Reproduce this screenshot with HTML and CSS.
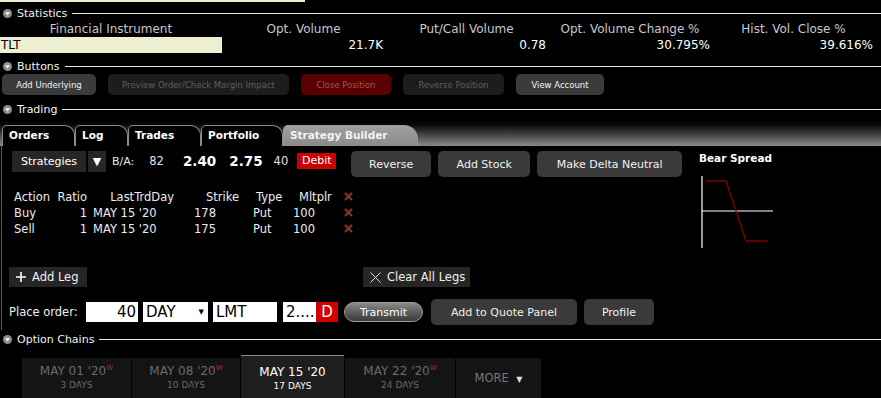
FILE: index.html
```html
<!DOCTYPE html>
<html lang="en">
<head>
  <meta charset="UTF-8" />
  <title>Strategy Builder</title>
  <link rel="stylesheet" href="styles.css">
</head>
<body>
  <div class="topbar"></div>

  <div class="sec-head first">
    <svg class="ico" width="9" height="9" viewBox="0 0 9 9"><circle cx="4.5" cy="4.5" r="4.5" fill="#8d8d8d"/><path d="M2 3.2h5L4.5 6.4z" fill="#fff"/></svg>
    <span class="sec-title">Statistics</span>
    <span class="sec-line"></span>
  </div>
  <div class="stats">
    <div class="stat-h">Financial Instrument</div>
    <div class="stat-h">Opt. Volume</div>
    <div class="stat-h">Put/Call Volume</div>
    <div class="stat-h">Opt. Volume Change %</div>
    <div class="stat-h">Hist. Vol. Close %</div>
    <div class="stat-v sym">TLT</div>
    <div class="stat-v">21.7K</div>
    <div class="stat-v">0.78</div>
    <div class="stat-v">30.795%</div>
    <div class="stat-v">39.616%</div>
  </div>

  <div class="sec-head">
    <svg class="ico" width="9" height="9" viewBox="0 0 9 9"><circle cx="4.5" cy="4.5" r="4.5" fill="#8d8d8d"/><path d="M2 3.2h5L4.5 6.4z" fill="#fff"/></svg>
    <span class="sec-title">Buttons</span>
    <span class="sec-line"></span>
  </div>
  <div class="btn-row">
    <button class="sbtn w-under">Add Underlying</button>
    <button class="sbtn off w-preview">Preview Order/Check Margin Impact</button>
    <button class="sbtn danger w-close">Close Position</button>
    <button class="sbtn off w-rev">Reverse Position</button>
    <button class="sbtn w-view">View Account</button>
  </div>

  <div class="sec-head trading-head">
    <svg class="ico" width="9" height="9" viewBox="0 0 9 9"><circle cx="4.5" cy="4.5" r="4.5" fill="#8d8d8d"/><path d="M2 3.2h5L4.5 6.4z" fill="#fff"/></svg>
    <span class="sec-title">Trading</span>
    <span class="sec-line"></span>
  </div>
  <div class="tabstrip">
    <div class="tab t-orders">Orders</div>
    <div class="tab t-log">Log</div>
    <div class="tab t-trades">Trades</div>
    <div class="tab t-port">Portfolio</div>
    <div class="tab active t-sb">Strategy Builder</div>
  </div>

  <div class="panel">
    <div class="builder">
      <div class="strat-row">
        <div class="strat-select">Strategies</div>
        <div class="strat-arrow">▼</div>
        <span class="ba-label">B/A:</span>
        <span class="ba-size">82</span>
        <span class="ba-price">2.40</span>
        <span class="ba-price">2.75</span>
        <span class="ba-size ask">40</span>
        <span class="debit">Debit</span>
        <button class="btn w-reverse">Reverse</button>
        <button class="btn w-stock">Add Stock</button>
        <button class="btn w-delta">Make Delta Neutral</button>
      </div>

      <div class="legs">
        <div class="c-act">Action</div>
        <div class="c-ratio">Ratio</div>
        <div class="c-day h">LastTrdDay</div>
        <div class="c-strike h">Strike</div>
        <div class="c-type h">Type</div>
        <div class="c-mult h">Mltplr</div>
        <div class="c-x"><svg width="9" height="9" viewBox="0 0 9 9"><path d="M1 1l7 7M8 1L1 8" stroke="#8a3232" stroke-width="2.2"/></svg></div>

        <div class="c-act">Buy</div>
        <div class="c-ratio">1</div>
        <div class="c-day">MAY 15 '20</div>
        <div class="c-strike">178</div>
        <div class="c-type">Put</div>
        <div class="c-mult">100</div>
        <div class="c-x"><svg width="9" height="9" viewBox="0 0 9 9"><path d="M1 1l7 7M8 1L1 8" stroke="#8a3232" stroke-width="2.2"/></svg></div>

        <div class="c-act">Sell</div>
        <div class="c-ratio">1</div>
        <div class="c-day">MAY 15 '20</div>
        <div class="c-strike">175</div>
        <div class="c-type">Put</div>
        <div class="c-mult">100</div>
        <div class="c-x"><svg width="9" height="9" viewBox="0 0 9 9"><path d="M1 1l7 7M8 1L1 8" stroke="#8a3232" stroke-width="2.2"/></svg></div>
      </div>

      <div class="leg-actions">
        <div class="flat w-add">
          <svg width="10" height="10" viewBox="0 0 10 10"><path d="M5 0v10M0 5h10" stroke="#fff" stroke-width="1.6"/></svg>
          Add Leg
        </div>
        <div class="flat w-clear">
          <svg width="11" height="11" viewBox="0 0 11 11"><path d="M0.5 0.5l10 10M10.5 0.5l-10 10" stroke="#ddd" stroke-width="1"/></svg>
          Clear All Legs
        </div>
      </div>

      <div class="order-row">
        <span class="order-label">Place order:</span>
        <div class="field f-qty">40</div>
        <div class="field f-tif">DAY <span class="caret">▼</span></div>
        <div class="field f-type">LMT</div>
        <div class="field f-price">2....</div>
        <div class="f-side">D</div>
        <button class="transmit">Transmit</button>
        <button class="btn w-quote">Add to Quote Panel</button>
        <button class="btn w-profile">Profile</button>
      </div>
    </div>

    <div class="chart">
      <div class="chart-title">Bear Spread</div>
      <svg width="76" height="76" viewBox="0 0 76 76">
        <path d="M3 2v72M3 37h71" stroke="#fff" stroke-width="1.2" fill="none"/>
        <path d="M7 7h20l20 60h21" stroke="#7d0000" stroke-width="1.4" fill="none"/>
      </svg>
    </div>
  </div>

  <div class="sec-head chains-head">
    <svg class="ico" width="9" height="9" viewBox="0 0 9 9"><circle cx="4.5" cy="4.5" r="4.5" fill="#8d8d8d"/><path d="M2 3.2h5L4.5 6.4z" fill="#fff"/></svg>
    <span class="sec-title">Option Chains</span>
    <span class="sec-line"></span>
  </div>
  <div class="chains">
    <div class="exp w1"><div class="exp-date">MAY 01 '20<sup>W</sup></div><div class="exp-days">3 DAYS</div></div>
    <div class="exp w2"><div class="exp-date">MAY 08 '20<sup>W</sup></div><div class="exp-days">10 DAYS</div></div>
    <div class="exp sel w3"><div class="exp-date">MAY 15 '20</div><div class="exp-days">17 DAYS</div></div>
    <div class="exp w4"><div class="exp-date">MAY 22 '20<sup>W</sup></div><div class="exp-days">24 DAYS</div></div>
    <div class="exp more">MORE <span class="more-caret">▼</span></div>
  </div>
</body>
</html>
```

FILE: styles.css
```css
* {
  box-sizing: border-box;
}
html, body {
  margin: 0;
  padding: 0;
  height: 100%;
  overflow: hidden;
}
body {
  width: 881px;
  background: #000;
  color: #fff;
  font-family: "DejaVu Sans", sans-serif;
  font-size: 11px;
}
button {
  font-family: inherit;
  border: none;
  cursor: pointer;
  padding: 0;
}

.topbar {
  width: 305px;
  height: 2px;
  background: #eeeed3;
}

/* section headers */
.sec-head {
  display: flex;
  align-items: center;
  height: 16px;
  margin-top: 5px;
  padding-left: 3px;
  gap: 5px;
}
.sec-head.first {
  margin-top: 3px;
}
.sec-head.trading-head {
  margin-top: 6px;
}
.sec-title {
  font-size: 11px;
  color: #f2f2f2;
  white-space: nowrap;
}
.sec-line {
  flex: 1;
  height: 1px;
  background: #e8e8e8;
}

/* statistics */
.stats {
  display: grid;
  grid-template-columns: 222px 163px 163px 164px 163px;
  margin-top: 1px;
}
.stat-h {
  height: 15px;
  line-height: 15px;
  text-align: center;
  font-size: 12px;
  color: #c8c8c8;
  white-space: nowrap;
}
.stat-v {
  height: 16px;
  line-height: 16px;
  text-align: right;
  font-size: 12px;
  padding-right: 2px;
}
.stat-v.sym {
  text-align: left;
  background: #eeeed3;
  color: #000;
  padding-left: 1px;
}

/* buttons row */
.btn-row {
  display: flex;
  gap: 12px;
  padding-left: 2px;
}
.sbtn {
  height: 21px;
  border-radius: 5px;
  background: #3b3b3b;
  color: #f4f4f4;
  font-size: 8.5px;
}
.sbtn.off {
  background: #1d1d1d;
  color: #5e5e5e;
}
.sbtn.danger {
  background: #5a0000;
  color: #9a5a5a;
}
.w-under { width: 94px; }
.w-preview { width: 181px; }
.w-close { width: 90px; }
.w-rev { width: 101px; }
.w-view { width: 88px; }

/* trading tabs */
.tabstrip {
  display: flex;
  align-items: flex-end;
  height: 26px;
  margin-top: 3px;
  padding-left: 2px;
  background: linear-gradient(#000 0%, #0a0a0a 20%, #8a8a8a 100%);
}
.tab {
  height: 21px;
  line-height: 19px;
  padding-left: 6px;
  background: #000;
  border: 1px solid #8a8a8a;
  border-bottom: none;
  border-radius: 5px 10px 0 0;
  font-size: 10.5px;
  font-weight: bold;
  color: #fff;
  white-space: nowrap;
}
.tab.active {
  background: linear-gradient(#a0a0a0, #8a8a8a);
  border-color: #9a9a9a;
  border-radius: 5px 14px 0 0;
  color: #f4f4f4;
}
.t-orders { width: 73px; }
.t-log { width: 53px; }
.t-trades { width: 73px; }
.t-port { width: 82px; }
.t-sb { width: 135px; }

.panel {
  display: flex;
  height: 184px;
  margin-left: 1px;
  border-left: 1px solid #5a5a5a;
  padding-top: 5px;
}
.builder {
  width: 695px;
}

/* strategy row */
.strat-row {
  display: flex;
  align-items: flex-start;
  height: 26px;
}
.strat-select {
  width: 74px;
  height: 21px;
  line-height: 21px;
  margin-left: 10px;
  background: #262626;
  text-align: center;
  font-size: 11px;
}
.strat-arrow {
  width: 18px;
  height: 21px;
  line-height: 21px;
  margin-left: 2px;
  background: #262626;
  text-align: center;
  font-size: 11px;
}
.ba-label {
  margin-left: 6px;
  line-height: 21px;
  font-size: 11px;
  color: #e6e6e6;
}
.ba-size {
  margin-left: 15px;
  line-height: 21px;
  font-size: 11.5px;
  color: #e0e0e0;
}
.ba-price {
  margin-left: 19px;
  line-height: 21px;
  font-size: 13.5px;
  font-weight: bold;
}
.ba-price + .ba-price {
  margin-left: 13px;
}
.ba-size.ask {
  margin-left: 11px;
}
.debit {
  margin-left: 9px;
  margin-top: 2px;
  width: 39px;
  height: 16px;
  line-height: 16px;
  text-align: center;
  background: #cc0000;
  font-size: 11px;
}
.btn {
  height: 26px;
  border-radius: 5px;
  background: #3a3a3a;
  color: #f0f0f0;
  font-size: 11px;
}
.w-reverse { width: 80px; margin-left: 15px; }
.w-stock { width: 92px; margin-left: 7px; }
.w-delta { width: 145px; margin-left: 7px; }

/* legs table */
.legs {
  display: grid;
  grid-template-columns: 43px 36px 96px 60px 44px 48px 22px;
  grid-auto-rows: 16px;
  margin-top: 12px;
  margin-left: 10px;
  font-size: 11.5px;
  line-height: 16px;
  white-space: nowrap;
}
.legs > div {
  color: #ececec;
}
.c-act { padding-left: 2px; }
.c-ratio { text-align: right; padding-right: 4px; }
.c-day { padding-left: 2px; }
.c-day.h { text-align: right; padding-right: 13px; }
.c-strike { padding-left: 7px; }
.c-strike.h { text-align: right; padding-right: 8px; padding-left: 0; }
.c-type { padding-left: 6px; }
.c-type.h { padding-left: 9px; }
.c-mult { padding-left: 2px; }
.c-mult.h { padding-left: 8px; }
.c-x {
  padding-left: 5px;
  padding-top: 3px;
}
.c-x svg {
  display: block;
}

/* add / clear legs */
.leg-actions {
  display: flex;
  margin-top: 30px;
  margin-left: 7px;
  gap: 276px;
}
.flat {
  display: flex;
  align-items: center;
  gap: 6px;
  height: 20px;
  padding-left: 7px;
  background: #262626;
  font-size: 11.5px;
  color: #f0f0f0;
}
.w-add { width: 78px; }
.w-clear { width: 107px; }

/* place order */
.order-row {
  display: flex;
  align-items: center;
  height: 26px;
  margin-top: 12px;
}
.order-label {
  margin-left: 7px;
  width: 77px;
  font-size: 11.5px;
  color: #f0f0f0;
}
.field {
  height: 20px;
  line-height: 20px;
  background: #fff;
  color: #000;
  font-size: 15px;
  padding-left: 3px;
  margin-right: 5px;
  white-space: nowrap;
}
.f-qty {
  width: 52px;
  text-align: right;
  padding-right: 2px;
}
.f-tif {
  width: 65px;
  display: flex;
  justify-content: space-between;
  padding-right: 4px;
}
.caret {
  font-size: 7px;
}
.f-type { width: 64px; }
.f-price {
  width: 33px;
  margin-right: 0;
  margin-left: 1px;
}
.f-side {
  width: 22px;
  height: 20px;
  line-height: 20px;
  background: #d40000;
  color: #fff;
  font-size: 15px;
  text-align: center;
}
.transmit {
  width: 79px;
  height: 20px;
  margin-left: 6px;
  border-radius: 10px;
  border: 1px solid #9c9c9c;
  background: linear-gradient(#8a8a8a, #5a5a5a 55%, #3c3c3c);
  color: #fff;
  font-size: 11px;
}
.w-quote { width: 146px; margin-left: 8px; }
.w-profile { width: 70px; margin-left: 7px; }

/* payoff chart */
.chart {
  padding-left: 2px;
}
.chart-title {
  height: 23px;
  line-height: 14px;
  font-size: 10.5px;
  font-weight: bold;
}
.chart svg {
  display: block;
}

/* option chains */
.chains-head {
  margin-top: 1px;
}
.chains {
  display: flex;
  align-items: flex-start;
  gap: 1px;
  margin-top: 8px;
  padding-left: 22px;
}
.exp {
  height: 45px;
  margin-top: 3px;
  padding-top: 6px;
  background: #141414;
  text-align: center;
  color: #6a6a6a;
}
.exp-date {
  font-size: 12px;
  line-height: 15px;
}
.exp-date sup {
  font-size: 7px;
  color: #a83030;
  vertical-align: 5px;
  line-height: 0;
}
.exp-days {
  font-size: 9px;
  line-height: 12px;
}
.exp.sel {
  margin-top: 0;
  height: 48px;
  padding-top: 9px;
  background: #1e1e1e;
  border-top: 1px solid #8a8a8a;
  color: #fff;
}
.w1 { width: 109px; }
.w2 { width: 108px; }
.w3 { width: 103px; }
.w4 { width: 110px; }
.exp.more {
  width: 85px;
  padding-top: 13px;
  font-size: 11.5px;
  color: #777;
}
.more-caret {
  font-size: 8px;
  color: #ddd;
  margin-left: 4px;
}
```
